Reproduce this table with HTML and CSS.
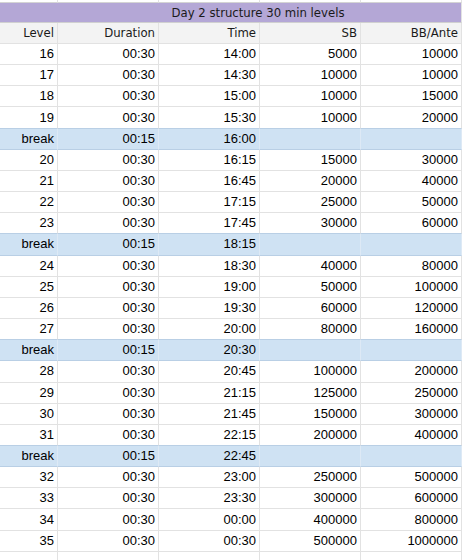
FILE: index.html
```
<!DOCTYPE html>
<html>
<head>
<meta charset="utf-8">
<link rel="stylesheet" href="styles.css">
</head>
<body>
<table class="sheet">
  <colgroup>
    <col class="c-level"><col class="c-wide"><col class="c-wide"><col class="c-wide"><col class="c-wide">
  </colgroup>
  <tbody>
    <tr class="strip top"><td></td><td></td><td></td><td></td><td></td></tr>
    <tr class="title"><td colspan="5">Day 2 structure 30 min levels</td></tr>
    <tr class="head"><td>Level</td><td>Duration</td><td>Time</td><td>SB</td><td>BB/Ante</td></tr>
    <tr class="row"><td>16</td><td>00:30</td><td>14:00</td><td>5000</td><td>10000</td></tr>
    <tr class="row"><td>17</td><td>00:30</td><td>14:30</td><td>10000</td><td>10000</td></tr>
    <tr class="row"><td>18</td><td>00:30</td><td>15:00</td><td>10000</td><td>15000</td></tr>
    <tr class="row"><td>19</td><td>00:30</td><td>15:30</td><td>10000</td><td>20000</td></tr>
    <tr class="row brk"><td>break</td><td>00:15</td><td>16:00</td><td></td><td></td></tr>
    <tr class="row"><td>20</td><td>00:30</td><td>16:15</td><td>15000</td><td>30000</td></tr>
    <tr class="row"><td>21</td><td>00:30</td><td>16:45</td><td>20000</td><td>40000</td></tr>
    <tr class="row"><td>22</td><td>00:30</td><td>17:15</td><td>25000</td><td>50000</td></tr>
    <tr class="row"><td>23</td><td>00:30</td><td>17:45</td><td>30000</td><td>60000</td></tr>
    <tr class="row brk"><td>break</td><td>00:15</td><td>18:15</td><td></td><td></td></tr>
    <tr class="row"><td>24</td><td>00:30</td><td>18:30</td><td>40000</td><td>80000</td></tr>
    <tr class="row"><td>25</td><td>00:30</td><td>19:00</td><td>50000</td><td>100000</td></tr>
    <tr class="row"><td>26</td><td>00:30</td><td>19:30</td><td>60000</td><td>120000</td></tr>
    <tr class="row"><td>27</td><td>00:30</td><td>20:00</td><td>80000</td><td>160000</td></tr>
    <tr class="row brk"><td>break</td><td>00:15</td><td>20:30</td><td></td><td></td></tr>
    <tr class="row"><td>28</td><td>00:30</td><td>20:45</td><td>100000</td><td>200000</td></tr>
    <tr class="row"><td>29</td><td>00:30</td><td>21:15</td><td>125000</td><td>250000</td></tr>
    <tr class="row"><td>30</td><td>00:30</td><td>21:45</td><td>150000</td><td>300000</td></tr>
    <tr class="row"><td>31</td><td>00:30</td><td>22:15</td><td>200000</td><td>400000</td></tr>
    <tr class="row brk"><td>break</td><td>00:15</td><td>22:45</td><td></td><td></td></tr>
    <tr class="row"><td>32</td><td>00:30</td><td>23:00</td><td>250000</td><td>500000</td></tr>
    <tr class="row"><td>33</td><td>00:30</td><td>23:30</td><td>300000</td><td>600000</td></tr>
    <tr class="row"><td>34</td><td>00:30</td><td>00:00</td><td>400000</td><td>800000</td></tr>
    <tr class="row"><td>35</td><td>00:30</td><td>00:30</td><td>500000</td><td>1000000</td></tr>
    <tr class="strip bottom"><td></td><td></td><td></td><td></td><td></td></tr>
  </tbody>
</table>
</body>
</html>
```
FILE: styles.css
```
html, body {
  margin: 0;
  padding: 0;
  background: #ffffff;
}

.sheet {
  border-collapse: separate;
  border-spacing: 0;
  table-layout: fixed;
  width: 462px;
  font-family: "Liberation Sans", Arial, sans-serif;
  font-size: 13px;
  color: #000;
}

.c-level { width: 58px; }
.c-wide { width: 101px; }

.sheet td {
  box-sizing: border-box;
  padding: 0 3px 0 2px;
  border-right: 1px solid #e2e2e2;
  border-bottom: 1px solid #e2e2e2;
  text-align: right;
  white-space: nowrap;
  overflow: hidden;
  vertical-align: middle;
  line-height: 16px;
}

.strip.top td {
  height: 3px;
  border-bottom-color: #d4d4d4;
}

.strip.bottom td {
  height: 9px;
  border-bottom: none;
}

.title td {
  height: 20px;
  background: #b4a7d6;
  border-bottom-color: #d0d0d0;
  text-align: center;
  padding-left: 58px;
  font-family: "DejaVu Sans Condensed", Tahoma, sans-serif;
  color: #1a1a1a;
}

.head td {
  height: 21px;
  background: #f3f3f3;
  font-family: "DejaVu Sans Condensed", Tahoma, sans-serif;
  color: #1a1a1a;
}

.row td {
  height: 21.17px;
}

.brk td {
  background: #cfe2f3;
  border-bottom-color: #b9cfe5;
  border-right-color: #dde9f5;
}

.row:has(+ .brk) td {
  border-bottom-color: #b9cfe5;
}
```
